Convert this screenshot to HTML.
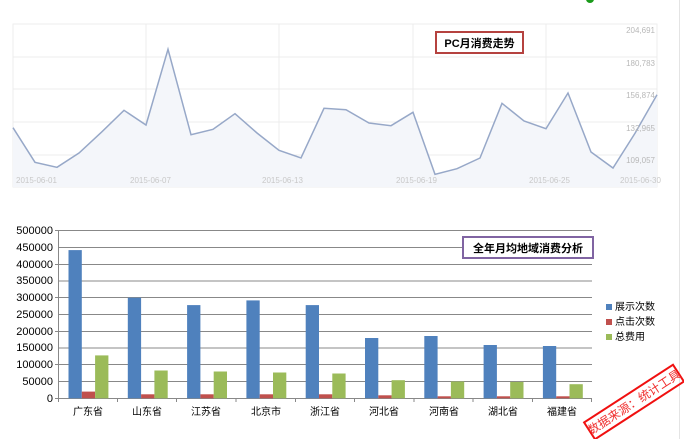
<!DOCTYPE html>
<html><head><meta charset="utf-8"><style>
body{margin:0;width:684px;height:439px;background:#fff;overflow:hidden;font-family:"Liberation Sans","Noto Sans CJK SC",sans-serif}
svg{position:absolute;left:0;top:0}
</style></head><body>
<svg width="684" height="439" viewBox="0 0 684 439" xmlns="http://www.w3.org/2000/svg">
<circle cx="590" cy="-1" r="4" fill="#1a9a1a"/>
<line x1="679.5" y1="0" x2="679.5" y2="439" stroke="#e4e4e4"/>
<!-- top chart -->
<rect x="13" y="24" width="644" height="163" fill="#fff" stroke="#eee"/>
<g stroke="#ececec" stroke-width="1">
<line x1="13" y1="57" x2="657" y2="57"/><line x1="13" y1="89" x2="657" y2="89"/>
<line x1="13" y1="122" x2="657" y2="122"/><line x1="13" y1="155" x2="657" y2="155"/>
<line x1="146" y1="24" x2="146" y2="187"/><line x1="279" y1="24" x2="279" y2="187"/>
<line x1="413" y1="24" x2="413" y2="187"/><line x1="546" y1="24" x2="546" y2="187"/>
</g>
<polygon fill="#f4f6fa" points="13,187 13,127.7 35,162.3 57,167.3 79,153 102,131.7 124,110.3 146,125 168,49.3 191,134.7 213,129.3 235,113.7 257,133 279,150.3 301,158 324,108.3 346,109.7 369,123 391,125.7 413,112.3 435,174.3 457,168.7 480,158 502,103.3 524,121 546,128.7 568,93 591,152 613,168 635,133.3 657,94.7 657,187"/>
<polyline fill="none" stroke="#97a8c8" stroke-width="1.5" points="13,127.7 35,162.3 57,167.3 79,153 102,131.7 124,110.3 146,125 168,49.3 191,134.7 213,129.3 235,113.7 257,133 279,150.3 301,158 324,108.3 346,109.7 369,123 391,125.7 413,112.3 435,174.3 457,168.7 480,158 502,103.3 524,121 546,128.7 568,93 591,152 613,168 635,133.3 657,94.7"/>
<g font-size="8" fill="#b8b8b8" text-anchor="end">
<text x="655" y="33">204,691</text><text x="655" y="66">180,783</text><text x="655" y="98">156,874</text><text x="655" y="131">132,965</text><text x="655" y="163">109,057</text>
</g>
<g font-size="8" fill="#c8c8c8">
<text x="16" y="183">2015-06-01</text><text x="130" y="183">2015-06-07</text><text x="262" y="183">2015-06-13</text><text x="396" y="183">2015-06-19</text><text x="529" y="183">2015-06-25</text><text x="620" y="183">2015-06-30</text>
</g>
<rect x="436" y="32" width="87" height="21" fill="#fff" stroke="#b5423f" stroke-width="2"/>
<text x="479.5" y="47" font-size="11" font-weight="bold" text-anchor="middle" fill="#000">PC月消费走势</text>
<!-- bottom chart -->
<g stroke="#888" stroke-width="1">
<line x1="58" y1="230.5" x2="592" y2="230.5"/><line x1="58" y1="247.5" x2="592" y2="247.5"/><line x1="58" y1="264.5" x2="592" y2="264.5"/><line x1="58" y1="281" x2="592" y2="281"/><line x1="58" y1="297.5" x2="592" y2="297.5"/><line x1="58" y1="314.5" x2="592" y2="314.5"/><line x1="58" y1="331.5" x2="592" y2="331.5"/><line x1="58" y1="348" x2="592" y2="348"/><line x1="58" y1="364.5" x2="592" y2="364.5"/><line x1="58" y1="381.5" x2="592" y2="381.5"/><line x1="58" y1="398.5" x2="592" y2="398.5"/>
<line x1="58.5" y1="230" x2="58.5" y2="402"/>
<line x1="117.5" y1="398" x2="117.5" y2="402"/><line x1="176.5" y1="398" x2="176.5" y2="402"/><line x1="236" y1="398" x2="236" y2="402"/><line x1="295.5" y1="398" x2="295.5" y2="402"/><line x1="354.5" y1="398" x2="354.5" y2="402"/><line x1="414" y1="398" x2="414" y2="402"/><line x1="473" y1="398" x2="473" y2="402"/><line x1="532.5" y1="398" x2="532.5" y2="402"/><line x1="591.5" y1="398" x2="591.5" y2="402"/>
<line x1="55" y1="230.5" x2="58" y2="230.5"/><line x1="55" y1="264.5" x2="58" y2="264.5"/><line x1="55" y1="297.5" x2="58" y2="297.5"/><line x1="55" y1="331.5" x2="58" y2="331.5"/><line x1="55" y1="364.5" x2="58" y2="364.5"/><line x1="55" y1="398.5" x2="58" y2="398.5"/>
</g>
<g font-size="11" fill="#000" text-anchor="end">
<text x="53" y="234">500000</text><text x="53" y="251">450000</text><text x="53" y="268">400000</text><text x="53" y="284">350000</text><text x="53" y="301">300000</text><text x="53" y="318">250000</text><text x="53" y="335">200000</text><text x="53" y="351">150000</text><text x="53" y="368">100000</text><text x="53" y="385">50000</text><text x="53" y="402">0</text>
</g>
<g fill="#4f81bd">
<rect x="68.5" y="250.1" width="13.3" height="148.2"/><rect x="127.8" y="297.7" width="13.3" height="100.6"/><rect x="187.1" y="305.1" width="13.3" height="93.2"/><rect x="246.4" y="300.4" width="13.3" height="97.9"/><rect x="305.7" y="305.1" width="13.3" height="93.2"/><rect x="365" y="338" width="13.3" height="60.3"/><rect x="424.3" y="336" width="13.3" height="62.3"/><rect x="483.6" y="345" width="13.3" height="53.3"/><rect x="542.9" y="346" width="13.3" height="52.3"/>
</g>
<g fill="#c0504d">
<rect x="81.8" y="391.6" width="13.3" height="6.7"/><rect x="141.1" y="394.3" width="13.3" height="4"/><rect x="200.4" y="394.3" width="13.3" height="4"/><rect x="259.7" y="394.3" width="13.3" height="4"/><rect x="319" y="394.3" width="13.3" height="4"/><rect x="378.3" y="395.3" width="13.3" height="3"/><rect x="437.6" y="396.3" width="13.3" height="2"/><rect x="496.9" y="396.3" width="13.3" height="2"/><rect x="556.2" y="396.3" width="13.3" height="2"/>
</g>
<g fill="#9bbb59">
<rect x="95.1" y="355.4" width="13.3" height="42.9"/><rect x="154.4" y="370.5" width="13.3" height="27.8"/><rect x="213.7" y="371.5" width="13.3" height="26.8"/><rect x="273" y="372.5" width="13.3" height="25.8"/><rect x="332.3" y="373.5" width="13.3" height="24.8"/><rect x="391.6" y="380.2" width="13.3" height="18.1"/><rect x="450.9" y="381.5" width="13.3" height="16.8"/><rect x="510.2" y="381.9" width="13.3" height="16.4"/><rect x="569.5" y="384.2" width="13.3" height="14.1"/>
</g>
<g font-size="10" fill="#000" text-anchor="middle">
<text x="88" y="415">广东省</text><text x="147" y="415">山东省</text><text x="206" y="415">江苏省</text><text x="266" y="415">北京市</text><text x="325" y="415">浙江省</text><text x="384" y="415">河北省</text><text x="444" y="415">河南省</text><text x="503" y="415">湖北省</text><text x="562" y="415">福建省</text>
</g>
<rect x="463" y="237" width="130" height="21" fill="#fff" stroke="#8064a2" stroke-width="2"/>
<text x="528" y="252" font-size="11" font-weight="bold" text-anchor="middle" fill="#000">全年月均地域消费分析</text>
<rect x="606" y="304" width="6" height="6" fill="#4f81bd"/><rect x="606" y="319" width="6" height="6" fill="#c0504d"/><rect x="606" y="334" width="6" height="6" fill="#9bbb59"/>
<g font-size="10" fill="#000"><text x="615" y="310">展示次数</text><text x="615" y="325">点击次数</text><text x="615" y="340">总费用</text></g>
<g transform="translate(634,402) rotate(-33)">
<rect x="-53" y="-10" width="106" height="20" fill="none" stroke="#f01010" stroke-width="2"/>
<text x="0" y="4.5" font-size="12" fill="#f03030" text-anchor="middle">数据来源：统计工具</text>
</g>
</svg>
</body></html>
